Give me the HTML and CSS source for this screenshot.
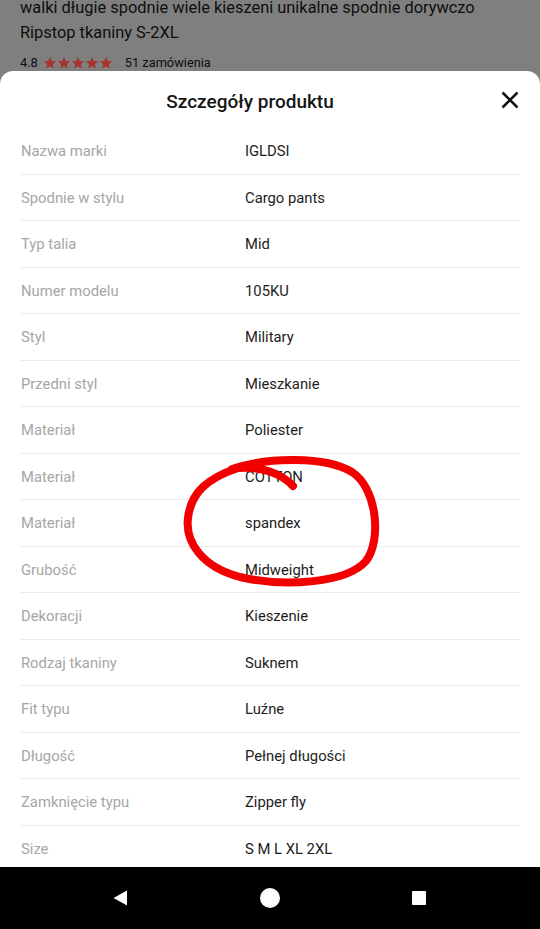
FILE: index.html
```html
<!DOCTYPE html>
<html lang="pl">
<head>
<meta charset="utf-8">
<title>Szczegóły produktu</title>
<link rel="stylesheet" href="styles.css">
</head>
<body>
<div class="screen">
  <div class="backdrop">
    <p class="bg-title">walki długie spodnie wiele kieszeni unikalne spodnie dorywczo<br>Ripstop tkaniny S-2XL</p>
    <div class="rating">
      <span class="score">4.8</span>
      <span class="stars">
        <svg viewBox="0 0 24 24"><path d="M12 1.5l3.1 7 7.4.6-5.6 4.9 1.7 7.4L12 17.6l-6.6 3.8 1.7-7.4L1.5 9.1l7.4-.6z"/></svg>
        <svg viewBox="0 0 24 24"><path d="M12 1.5l3.1 7 7.4.6-5.6 4.9 1.7 7.4L12 17.6l-6.6 3.8 1.7-7.4L1.5 9.1l7.4-.6z"/></svg>
        <svg viewBox="0 0 24 24"><path d="M12 1.5l3.1 7 7.4.6-5.6 4.9 1.7 7.4L12 17.6l-6.6 3.8 1.7-7.4L1.5 9.1l7.4-.6z"/></svg>
        <svg viewBox="0 0 24 24"><path d="M12 1.5l3.1 7 7.4.6-5.6 4.9 1.7 7.4L12 17.6l-6.6 3.8 1.7-7.4L1.5 9.1l7.4-.6z"/></svg>
        <svg viewBox="0 0 24 24"><path d="M12 1.5l3.1 7 7.4.6-5.6 4.9 1.7 7.4L12 17.6l-6.6 3.8 1.7-7.4L1.5 9.1l7.4-.6z"/></svg>
      </span>
      <span class="orders">51 zamówienia</span>
    </div>
  </div>

  <div class="sheet">
    <div class="sheet-head">
      <h1 class="sheet-title">Szczegóły produktu</h1>
      <button class="close" aria-label="Zamknij">
        <svg viewBox="0 0 20 20"><path d="M2.5 2.5L17.5 17.5M17.5 2.5L2.5 17.5"/></svg>
      </button>
    </div>
    <div class="rows">
      <div class="row"><span class="key">Nazwa marki</span><span class="val">IGLDSI</span></div>
      <div class="row"><span class="key">Spodnie w stylu</span><span class="val">Cargo pants</span></div>
      <div class="row"><span class="key">Typ talia</span><span class="val">Mid</span></div>
      <div class="row"><span class="key">Numer modelu</span><span class="val">105KU</span></div>
      <div class="row"><span class="key">Styl</span><span class="val">Military</span></div>
      <div class="row"><span class="key">Przedni styl</span><span class="val">Mieszkanie</span></div>
      <div class="row"><span class="key">Materiał</span><span class="val">Poliester</span></div>
      <div class="row"><span class="key">Materiał</span><span class="val">COTTON</span></div>
      <div class="row"><span class="key">Materiał</span><span class="val">spandex</span></div>
      <div class="row"><span class="key">Grubość</span><span class="val">Midweight</span></div>
      <div class="row"><span class="key">Dekoracji</span><span class="val">Kieszenie</span></div>
      <div class="row"><span class="key">Rodzaj tkaniny</span><span class="val">Suknem</span></div>
      <div class="row"><span class="key">Fit typu</span><span class="val">Luźne</span></div>
      <div class="row"><span class="key">Długość</span><span class="val">Pełnej długości</span></div>
      <div class="row"><span class="key">Zamknięcie typu</span><span class="val">Zipper fly</span></div>
      <div class="row"><span class="key">Size</span><span class="val">S M L XL 2XL</span></div>
    </div>
    <svg class="scribble" viewBox="0 0 540 929" aria-hidden="true">
      <path d="M232 469 C268 457 325 456 352 472 C377 488 382 540 366 561 C346 584 282 587 240 577 C202 567 185 542 188 518 C191 492 208 478 238 468 C262 466 282 474 293 486"/>
    </svg>
  </div>

  <div class="navbar">
    <svg class="nav-back" viewBox="0 0 16 18"><path d="M15 1.5V16.5L1.5 9Z"/></svg>
    <span class="nav-home"></span>
    <span class="nav-recent"></span>
  </div>
</div>
</body>
</html>
```

FILE: styles.css
```css
* { box-sizing: border-box; }
html, body { margin: 0; padding: 0; }
body {
  font-family: Roboto, "Noto Sans", "Liberation Sans", sans-serif;
  background: #000;
}
.screen {
  width: 540px;
  height: 929px;
  display: flex;
  flex-direction: column;
  background: #7f7f7f;
  overflow: hidden;
}
.backdrop {
  height: 71px;
  flex: none;
  padding: 0 20px;
  overflow: hidden;
  color: #0e0e0e;
}
.bg-title {
  margin: -5px 0 0;
  font-size: 16.4px;
  line-height: 25px;
}
.rating {
  margin-top: 10px;
  display: flex;
  align-items: center;
  font-size: 12.8px;
  line-height: 16px;
}
.score { margin-right: 5px; }
.stars { display: flex; margin-right: 12px; }
.stars svg { width: 14px; height: 14px; fill: #a8342c; }
.sheet {
  position: relative;
  flex: 1;
  background: #fff;
  border-radius: 13px 13px 0 0;
  overflow: hidden;
}
.sheet-head {
  position: relative;
  height: 57px;
  display: flex;
  align-items: center;
  justify-content: center;
  padding-right: 40px;
}
.sheet-title {
  margin: 4px 0 0;
  font-size: 19px;
  font-weight: 500;
  color: #151515;
}
.close {
  position: absolute;
  right: 20px;
  top: 19px;
  width: 20px;
  height: 20px;
  padding: 0;
  border: 0;
  background: none;
}
.close svg {
  width: 20px;
  height: 20px;
  stroke: #111;
  stroke-width: 2.6;
  fill: none;
}
.rows { margin: 0 20px; }
.row {
  height: 46.5px;
  display: flex;
  align-items: center;
  padding-top: 1px;
  border-bottom: 1px solid #ececec;
}
.row:last-child { border-bottom: 0; }
.key {
  width: 225px;
  flex: none;
  padding-left: 1px;
  font-size: 14.8px;
  color: #a6a6a6;
}
.val {
  font-size: 14.8px;
  color: #1d1d1d;
}
.scribble {
  position: absolute;
  left: 0;
  top: -71px;
  width: 540px;
  height: 929px;
  pointer-events: none;
}
.scribble path {
  fill: none;
  stroke: #f20000;
  stroke-width: 8;
  stroke-linecap: round;
  stroke-linejoin: round;
}
.navbar {
  height: 62px;
  flex: none;
  background: #000;
  display: flex;
  align-items: center;
  padding-left: 112px;
}
.nav-back { width: 16px; height: 18px; fill: #fff; margin-right: 132px; }
.nav-home {
  width: 20px; height: 20px; border-radius: 50%; background: #fff;
  margin-right: 132px;
}
.nav-recent { width: 14px; height: 14px; background: #fff; border-radius: 1px; }
```
